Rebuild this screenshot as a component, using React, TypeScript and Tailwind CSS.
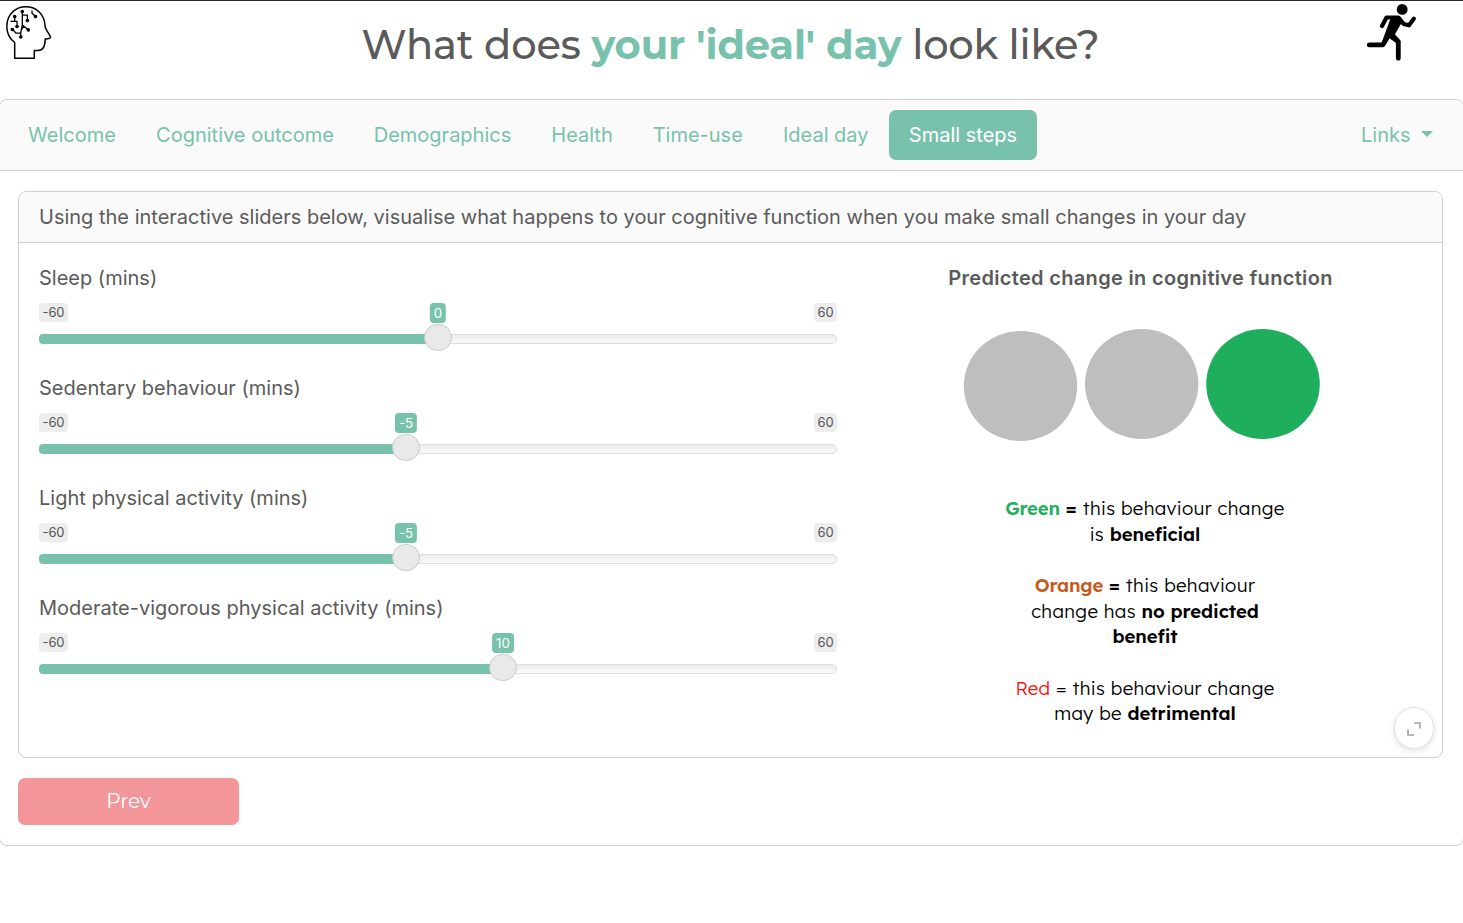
import type { ReactNode } from "react";

const TABS: { name: string; style: string }[] = [
  { name: "Welcome", style: "w-[128px]" },
  { name: "Cognitive outcome", style: "w-[218px]" },
  { name: "Demographics", style: "w-[177px]" },
  { name: "Health", style: "w-[102px]" },
  { name: "Time-use", style: "w-[129.5px]" },
  { name: "Ideal day", style: "w-[126.5px]" },
  { name: "Small steps", style: "w-[148px] rounded-[7px] bg-[#78c2ad] text-white" },
];

const SLIDERS = [
  { label: "Sleep (mins)", value: 0 },
  { label: "Sedentary behaviour (mins)", value: -5 },
  { label: "Light physical activity (mins)", value: -5 },
  { label: "Moderate-vigorous physical activity (mins)", value: 10 },
];

const TRACK_WIDTH = 798;
const HANDLE_WIDTH = 28;

function HeadIcon() {
  return (
    <svg className="h-[70px] w-[70px]" viewBox="0 0 70 70" fill="none" stroke="#000" strokeWidth="1.5" strokeLinejoin="round">
      <path d="M14.7 58.3V42.5C10 39 6.8 33 6.8 26.5C6.8 15 15 6.8 25.8 6.8C36.5 6.8 44.5 14.5 45 25.5C45 29 49 33.5 50.5 37C50.8 38.2 49 38.7 45.2 39C45.2 44 44.5 50.5 38 50.5H34.3V58.3Z" />
      <path d="M22.3 11.5V25L20.7 33.5M22.3 15.2H27.4V20M14.7 17V21.3H10.5M14.7 21.3H17V26M32 10.5V13.2L35.5 16.5M12.5 29.5L16.2 33.2H20.7V37M20.7 30.5L24 26.2L28.3 30M22.3 25L24 26.2" strokeWidth="1.3" />
      <g fill="#000" stroke="none">
        <circle cx="22.3" cy="11.6" r="1.8" />
        <circle cx="14.7" cy="16.6" r="1.8" />
        <circle cx="27.4" cy="20.6" r="1.8" />
        <circle cx="17" cy="26.5" r="1.8" />
        <circle cx="35.5" cy="16.6" r="1.8" />
        <circle cx="12.4" cy="29.5" r="1.8" />
        <circle cx="28.3" cy="29.9" r="1.8" />
        <circle cx="20.8" cy="37" r="1.8" />
      </g>
    </svg>
  );
}

function RunnerIcon() {
  return (
    <svg className="h-[70px] w-[70px]" viewBox="0 0 70 70" fill="none" stroke="#000" strokeLinecap="round" strokeLinejoin="round">
      <circle cx="47.2" cy="9.4" r="5.4" fill="#000" stroke="none" />
      <path d="M27 26L31.5 17.5H43.5L48.7 24L54 25.3L58.8 18.8" strokeWidth="4.2" />
      <path d="M36.5 16L45.5 17L46.5 23L39.5 35L45.5 41.5L41 43L33.5 37.5L29.5 45L26.5 43Z" fill="#000" stroke="none" />
      <path d="M14.2 44.9H28L35 33" strokeWidth="4.6" />
      <path d="M36 33.5L43.3 41.5V58.3" strokeWidth="4.8" />
      <path d="M35.3 32L41 22" strokeWidth="8" />
    </svg>
  );
}

function Slider({ label, value }: { label: string; value: number }) {
  const center = Math.ceil(((value + 60) / 120) * (TRACK_WIDTH - HANDLE_WIDTH)) + HANDLE_WIDTH / 2;
  return (
    <div className="h-[110px]">
      <div className="h-[40px] leading-[30px]">{label}</div>
      <div className="relative w-[798px]">
        <div className="flex h-[31px] items-start justify-between text-[13px] leading-[19px] tracking-[-0.1px] text-[#555]">
          <span className="flex h-[19px] w-[29px] justify-center rounded-[4px] bg-[#ededed]">-60</span>
          <span className="flex h-[19px] w-[23px] justify-center rounded-[4px] bg-[#ededed]">60</span>
        </div>
        <div className="h-[10px] overflow-hidden rounded-[5px] border border-[#dedede] bg-linear-to-b from-[#ececec] to-[#fafafa]" />
        <div className="absolute top-[31px] left-0 h-[10px] rounded-l-[4px] bg-[#78c2ad]" style={{ width: center }} />
        <div
          className="absolute top-[21px] h-[27px] w-[28px] rounded-full border border-[#c9c9c9] bg-[#e9e9e9]"
          style={{ left: center - HANDLE_WIDTH / 2 }}
        />
        <span
          className="absolute top-0 flex h-[20px] -translate-x-1/2 items-center rounded-[4px] bg-[#78c2ad] px-[4px] text-[13.33px] leading-[20px] text-white"
          style={{ left: center }}
        >
          {value}
        </span>
      </div>
    </div>
  );
}

function Line({ children, className = "" }: { children: ReactNode; className?: string }) {
  return <div className={`whitespace-nowrap ${className}`}>{children}</div>;
}

export default function App() {
  return (
    <div className="h-[923px] w-full overflow-hidden border-t border-[#2b2730] bg-white font-['Inter',sans-serif] text-[20px] text-[#5a5a5a]">
      <header className="-mt-px flex h-[99px] justify-between">
        <div className="w-[106px]">
          <HeadIcon />
        </div>
        <h1 className="flex h-[90px] items-center font-['Montserrat','Inter',sans-serif] text-[40px] font-medium whitespace-nowrap">
          <span className="tracking-[-0.1px]">What does&nbsp;</span>
          <span className="font-bold tracking-[-0.13px] text-[#78c2ad]">your 'ideal' day</span>
          <span className="tracking-[-0.2px]">&nbsp;look like?</span>
        </h1>
        <div className="mr-[38px]">
          <RunnerIcon />
        </div>
      </header>

      <main className="-mx-px h-[747px] rounded-[8px] border border-[#cfcfcf]">
        <nav className="flex h-[71px] items-center rounded-t-[7px] border-b border-[#cfcfcf] bg-[#fafafa] pr-[30px] pl-[8px] leading-[30px] text-[#78c2ad]">
          {TABS.map((tab) => (
            <a key={tab.name} className={`flex h-[50px] shrink-0 items-center justify-center whitespace-nowrap ${tab.style}`}>
              {tab.name}
            </a>
          ))}
          <a className="ml-auto flex items-center">
            Links
            <svg className="mt-[-2px] ml-[10.5px] h-[6px] w-[12px]" viewBox="0 0 12 6">
              <path d="M0 0H12L6 6Z" fill="#78c2ad" />
            </svg>
          </a>
        </nav>

        <div className="pt-[20px] pr-[20px] pl-[18px]">
          <section className="h-[567px] rounded-[8px] border border-[#cfcfcf]">
            <div className="h-[51px] rounded-t-[7px] border-b border-[#cfcfcf] bg-[#fafafa] pl-[20px] leading-[50px]">
              Using the interactive sliders below, visualise what happens to your cognitive function when you make small changes in your day
            </div>
            <div className="relative flex h-[514px]">
              <div className="w-[818px] pt-[20px] pl-[20px]">
                {SLIDERS.map((slider) => (
                  <Slider key={slider.label} {...slider} />
                ))}
              </div>
              <div className="flex w-[606px] flex-col items-center pt-[20px]">
                <div className="ml-[2px] leading-[30px] font-semibold tracking-[0.32px] whitespace-nowrap">
                  Predicted change in cognitive function
                </div>
                <svg className="mt-[30px] ml-[4px] h-[120px] w-[360px]" viewBox="0 0 360 120">
                  <ellipse cx="58.5" cy="63" rx="56.7" ry="55" fill="#bebebe" />
                  <ellipse cx="179.7" cy="61" rx="56.7" ry="55" fill="#bebebe" />
                  <ellipse cx="301" cy="61" rx="56.8" ry="55" fill="#1fae5b" />
                </svg>
                <div className="mt-[53.4px] ml-[11px] text-center font-['Lexend','Inter',sans-serif] text-[18.6px] leading-[25.6px] font-light tracking-[0.36px] text-black">
                  <Line>
                    <b className="font-semibold tracking-[-0.2px] text-[#1fae5b]">Green</b> <b className="font-semibold">=</b> this behaviour change
                  </Line>
                  <Line>
                    is <b className="font-semibold tracking-[-0.1px]">beneficial</b>
                  </Line>
                  <Line className="mt-[25.6px]">
                    <b className="font-semibold tracking-[-0.2px] text-[#c55a1e]">Orange</b> <b className="font-semibold">=</b> this behaviour
                  </Line>
                  <Line>
                    change has <b className="font-semibold tracking-[-0.05px]">no predicted</b>
                  </Line>
                  <Line>
                    <b className="font-semibold tracking-[-0.1px]">benefit</b>
                  </Line>
                  <Line className="mt-[25.6px]">
                    <span className="text-[#fa0f0f]">Red</span> = this behaviour change
                  </Line>
                  <Line>
                    may be <b className="font-semibold tracking-[-0.05px]">detrimental</b>
                  </Line>
                </div>
              </div>
              <button className="absolute right-[8px] bottom-[8px] flex h-[42px] w-[40px] items-center justify-center rounded-full border border-[#e2e2e2] bg-white pt-[2px] shadow-[0_2px_6px_rgba(0,0,0,0.12)]">
                <svg className="h-[14px] w-[14px]" viewBox="0 0 14 14" fill="none" stroke="#a3a3a3" strokeWidth="1.6">
                  <path d="M7 1H13V6.5M1 7.5V13H7" />
                </svg>
              </button>
            </div>
          </section>
          <button className="mt-[20px] flex h-[47px] w-[221px] items-center justify-center rounded-[7px] bg-[#f3969a] pb-[2px] font-['Montserrat','Inter',sans-serif] text-[20px] text-white">
            Prev
          </button>
        </div>
      </main>
    </div>
  );
}
